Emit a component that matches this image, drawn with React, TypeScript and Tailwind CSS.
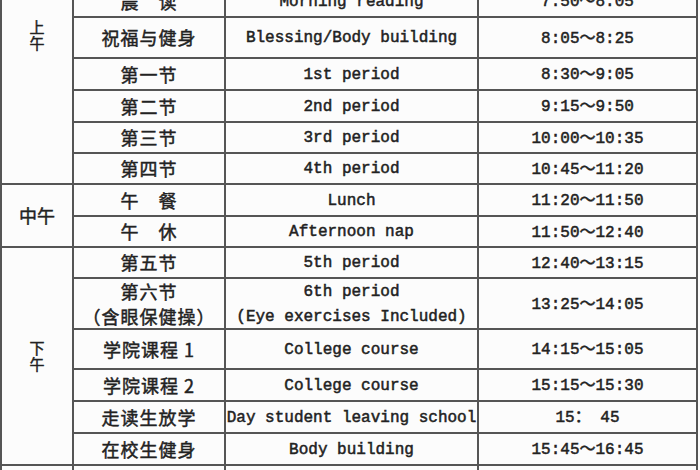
const cjk = "font-['Noto_Sans_CJK_SC',sans-serif] [-webkit-text-stroke:0.45px_#222]"
const mono = "font-['Liberation_Mono','Noto_Sans_CJK_SC',monospace] [-webkit-text-stroke:0.5px_#222]"

type Row = { name: string[]; en: string[]; time: string }

const morning: Row[] = [
  { name: ["晨　读"], en: ["Morning reading"], time: "7:50～8:05" },
  { name: ["祝福与健身"], en: ["Blessing/Body building"], time: "8:05～8:25" },
  { name: ["第一节"], en: ["1st period"], time: "8:30～9:05" },
  { name: ["第二节"], en: ["2nd period"], time: "9:15～9:50" },
  { name: ["第三节"], en: ["3rd period"], time: "10:00～10:35" },
  { name: ["第四节"], en: ["4th period"], time: "10:45～11:20" },
]

const noon: Row[] = [
  { name: ["午　餐"], en: ["Lunch"], time: "11:20～11:50" },
  { name: ["午　休"], en: ["Afternoon nap"], time: "11:50～12:40" },
]

const afternoon: Row[] = [
  { name: ["第五节"], en: ["5th period"], time: "12:40～13:15" },
  { name: ["第六节", "（含眼保健操）"], en: ["6th period", "(Eye exercises Included)"], time: "13:25～14:05" },
  { name: ["学院课程 1"], en: ["College course"], time: "14:15～15:05" },
  { name: ["学院课程 2"], en: ["College course"], time: "15:15～15:30" },
  { name: ["走读生放学"], en: ["Day student leaving school"], time: "15： 45" },
  { name: ["在校生健身"], en: ["Body building"], time: "15:45～16:45" },
]

function Cells({ row }: { row: Row }) {
  return (
    <>
      <div className={`bg-[#fcfcfc] flex flex-col items-center justify-center text-[18px] tracking-[1px] leading-[25px] text-[#222] ${cjk}`}>
        {row.name.map((t) => (
          <span key={t}>{t}</span>
        ))}
      </div>
      <div className={`bg-[#fcfcfc] flex flex-col items-center justify-center pt-[2px] text-[16px] leading-[25px] text-[#222] whitespace-pre ${mono}`}>
        {row.en.map((t) => (
          <span key={t}>{t}</span>
        ))}
      </div>
      <div className={`bg-[#fcfcfc] flex items-center justify-center pt-[2px] text-[16px] text-[#222] ${mono}`}>
        {row.time}
      </div>
    </>
  )
}

export default function App() {
  return (
    <div className="w-[700px] h-[470px] overflow-hidden bg-[#fcfcfc]">
      <div className="-mt-4 w-[698px] grid grid-cols-[70px_150px_251px_217px] grid-rows-[30px_39px_30px_30px_29px_29px_30px_29px_29px_49px_38px_30px_30px_30px_30px] gap-[2px] p-[2px] bg-[#555]">
        <div className={`row-span-6 bg-[#fcfcfc] flex justify-center pt-[33px] text-[15px] leading-[16px] text-center text-[#222] ${cjk}`}>
          <p className="w-[16px] break-all">上午</p>
        </div>
        {morning.map((r) => (
          <Cells key={r.time} row={r} />
        ))}
        <div className={`row-span-2 bg-[#fcfcfc] flex items-center justify-center text-[18px] text-[#222] ${cjk}`}>
          中午
        </div>
        {noon.map((r) => (
          <Cells key={r.time} row={r} />
        ))}
        <div className={`row-span-6 bg-[#fcfcfc] flex items-center justify-center text-[15px] leading-[16px] text-center text-[#222] ${cjk}`}>
          <p className="w-[16px] break-all">下午</p>
        </div>
        {afternoon.map((r) => (
          <Cells key={r.time} row={r} />
        ))}
        <div className="bg-[#fcfcfc]" />
        <div className="bg-[#fcfcfc]" />
        <div className="bg-[#fcfcfc]" />
        <div className="bg-[#fcfcfc]" />
      </div>
    </div>
  )
}
